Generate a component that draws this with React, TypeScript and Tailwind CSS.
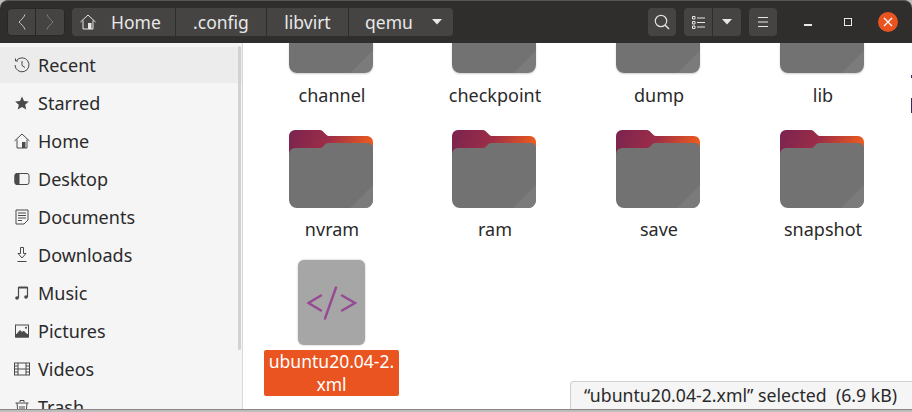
import React from "react";

const font = "font-['Noto_Sans','Open_Sans',sans-serif]";

function Folder() {
  return (
    <svg width="84" height="78" viewBox="0 0 84 78" className="block">
      <defs>
        <linearGradient id="fb" x1="0" y1="0" x2="1" y2="0.2">
          <stop offset="0" stopColor="#7a2350" />
          <stop offset="0.5" stopColor="#9c2d47" />
          <stop offset="1" stopColor="#ec5a1e" />
        </linearGradient>
      </defs>
      <path d="M0 40V6a6 6 0 0 1 6-6h24c2 0 3 .5 4 1.500l3 3c1 1 2 1.500 3 1.500h38a6 6 0 0 1 6 6v28z" fill="url(#fb)" />
      <path d="M0 24a6 6 0 0 1 6-6h25c1 0 2-.5 3-1.500l2.500-2.500c1-1 2-1 3.500-1h39a5 5 0 0 1 5 5v52a8 8 0 0 1-8 8H8a8 8 0 0 1-8-8z" fill="#727272" />
      <path d="M84 55v15a8 8 0 0 1-8 8H61z" fill="#7b7b7b" />
    </svg>
  );
}

function CutFolder() {
  return (
    <div className="h-[30px] w-[84px] rounded-b-[8px] bg-[linear-gradient(135deg,#727272_calc(100%-16px),#7b7b7b_calc(100%-16px))] shadow-[0_1px_2px_rgba(0,0,0,0.2)]" />
  );
}

function Cell({ label }: { label: string }) {
  return (
    <div className="flex flex-col items-center">
      <Folder />
      <span className="mt-[9px] pl-[2px] text-[18px] leading-[24px] text-[#2a2a2a]">{label}</span>
    </div>
  );
}

const ic = "w-[16px] h-[16px] text-[#4a4a4a]";
const icons: Record<string, React.ReactNode> = {
  Recent: (
    <svg viewBox="0 0 16 16" className={ic} fill="none" stroke="currentColor" strokeWidth="1"><path d="M2.500 3.500A7 7 0 1 1 1 8" /><path d="M1.500 1.500v2.500h2.500M8 4v4.500l3 2" /></svg>
  ),
  Starred: (
    <svg viewBox="0 0 16 16" className={ic} fill="currentColor"><path d="M8 1.500l2 4.500 4.800.5-3.600 3.200 1 4.800L8 12.100 3.800 14.500l1-4.800L1.200 6.500 6 6z" /></svg>
  ),
  Home: (
    <svg viewBox="0 0 16 16" className={ic} fill="none" stroke="currentColor" strokeWidth="1"><path d="M.5 8L8 1l7.500 7M3 6.500V15h10V6.500" /><rect x="8" y="9" width="3.500" height="6" fill="currentColor" stroke="none" /></svg>
  ),
  Desktop: (
    <svg viewBox="0 0 16 16" className={ic} fill="none" stroke="currentColor" strokeWidth="1"><rect x="1" y="2.500" width="14" height="11" rx="2" /><path d="M3 2.500h2v11H3a2 2 0 0 1-2-2v-7a2 2 0 0 1 2-2z" fill="currentColor" /></svg>
  ),
  Documents: (
    <svg viewBox="0 0 16 16" className={ic} fill="none" stroke="currentColor" strokeWidth="1"><path d="M2 1h12v10l-4 4H2z" /><path d="M4 4h8M4 6.500h8M4 9h8M4 11.500h4" /></svg>
  ),
  Downloads: (
    <svg viewBox="0 0 16 16" className={ic} fill="none" stroke="currentColor" strokeWidth="1"><path d="M6.500 .5h3v6H12L8 11 4 6.500h2.500zM3.500 14.500h9" /></svg>
  ),
  Music: (
    <svg viewBox="0 0 16 16" className={ic} fill="none" stroke="currentColor" strokeWidth="1.200"><path d="M4.500 13V2.500h9V12" /><path d="M4.500 2.500h9" strokeWidth="2" /><circle cx="3" cy="13" r="1.800" fill="currentColor" stroke="none" /><circle cx="12" cy="12" r="1.800" fill="currentColor" stroke="none" /></svg>
  ),
  Pictures: (
    <svg viewBox="0 0 16 16" className={ic} fill="none" stroke="currentColor" strokeWidth="1"><rect x="1.500" y="2" width="13" height="12" /><path d="M3 11l3-3.500 2 2 1.500-1.500 3 3z M1.500 11.500h13v2.500h-13z" fill="currentColor" /><circle cx="12" cy="4.800" r="1" fill="currentColor" stroke="none" /></svg>
  ),
  Videos: (
    <svg viewBox="0 0 16 16" className={ic} fill="none" stroke="currentColor" strokeWidth="1"><rect x=".5" y="2" width="15" height="12" /><path d="M4 2v12M12 2v12M4 8h8M.5 5h3.500M.5 8h3.500M.5 11h3.500M12 5h3.500M12 8h3.500M12 11h3.500" /></svg>
  ),
  Trash: (
    <svg viewBox="0 0 16 16" className={ic} fill="none" stroke="currentColor" strokeWidth="1"><path d="M1.500 4h13M6 3V1.500h4V3M3 4l1 11h8l1-11M6 7v6M8 7v6M10 7v6" /></svg>
  ),
};

function SideRow({ label, active }: { label: string; active?: boolean }) {
  return (
    <div className={`h-[36px] mb-[2px] shrink-0 flex items-center pl-[14px] gap-[8px] ${active ? "bg-[#ececec]" : ""}`}>
      {icons[label]}
      <span className="text-[18px] text-[#2a2a2a]">{label}</span>
    </div>
  );
}

const crumbBorder = "border-r border-[#2f2d2c]";

export default function App() {
  return (
    <div className={`w-[912px] h-[412px] overflow-hidden bg-[#bdbdbd] flex flex-col relative ${font}`}>
      <header className="h-[43px] shrink-0 bg-[#302e2d] rounded-t-[8px] border-t border-[#555] flex items-center pl-[7px] pr-[14px] text-[#e8e8e8]">
        <div className="flex h-[28px] w-[58px] rounded-[4px] bg-[#454443] border border-[#2a2827]">
          <div className="w-[28px] flex items-center justify-center border-r border-[#2a2827]">
            <svg width="8" height="16" viewBox="0 0 8 16" fill="none" stroke="#c9c9c9"><path d="M7 .5C6 3.500 3 6 1 8c2 2 5 4.500 6 7.500" /></svg>
          </div>
          <div className="flex-1 flex items-center justify-center">
            <svg width="8" height="16" viewBox="0 0 8 16" fill="none" stroke="#7d7d7d"><path d="M1 .5C2 3.500 5 6 7 8c-2 2-5 4.500-6 7.500" /></svg>
          </div>
        </div>
        <div className="ml-[7px] flex h-[28px] w-[381px] rounded-[4px] bg-[#454443] text-[17.5px] items-stretch">
          <div className={`w-[104px] flex items-center pl-[8px] gap-[15px] ${crumbBorder}`}>
            <svg width="16" height="16" viewBox="0 0 16 16" fill="none" stroke="#e8e8e8"><path d="M.5 8L8 1l7.500 7M3 6.500V15h10V6.500" /><rect x="8" y="9" width="3.500" height="6" fill="#e8e8e8" stroke="none" /></svg>
            <span>Home</span>
          </div>
          <div className={`w-[91px] flex items-center justify-center ${crumbBorder}`}>.config</div>
          <div className={`w-[82px] flex items-center justify-center ${crumbBorder}`}>libvirt</div>
          <div className="flex-1 flex items-center pl-[16px]">
            <span>qemu</span>
            <svg width="10" height="6" viewBox="0 0 10 6" className="ml-[19px]"><path d="M0 0h10L5 5.500z" fill="#e8e8e8" /></svg>
          </div>
        </div>
        <div className="flex-1" />
        <div className="w-[28px] h-[28px] rounded-[4px] bg-[#454443] flex items-center justify-center">
          <svg width="16" height="16" viewBox="0 0 16 16" fill="none" stroke="#e0e0e0" strokeWidth="1.200"><circle cx="7" cy="7" r="5.700" /><path d="M11 11l4 4" strokeWidth="1.600" /></svg>
        </div>
        <div className="ml-[8px] flex w-[57px] h-[28px] rounded-[4px] bg-[#454443]">
          <div className={`w-[29px] flex items-center justify-center ${crumbBorder}`}>
            <svg width="13" height="13" viewBox="0 0 13 13" fill="none" stroke="#e8e8e8"><path d="M.5.500h2.500v2.500H.5zM.5 5.500h2.500v2.500H.5zM.5 10h2.500v2.500H.5zM5 2h8M5 6.500h8M5 11h8" /></svg>
          </div>
          <div className="flex-1 flex items-center justify-center">
            <svg width="10" height="6" viewBox="0 0 10 6"><path d="M0 0h10L5 5.500z" fill="#e8e8e8" /></svg>
          </div>
        </div>
        <div className="ml-[8px] w-[28px] h-[28px] rounded-[4px] bg-[#454443] flex items-center justify-center">
          <svg width="14" height="12" viewBox="0 0 14 12" fill="none" stroke="#e8e8e8"><path d="M2 1.500h10M2 6h10M2 10.500h10" /></svg>
        </div>
        <div className="ml-[27px] w-[8px] h-[2px] bg-[#e8e8e8] mt-[6px]" />
        <div className="ml-[32px] w-[8px] h-[8px] border border-[#e8e8e8]" />
        <div className="ml-[26px] w-[20px] h-[20px] rounded-full bg-[#e95420] flex items-center justify-center">
          <svg width="10" height="10" viewBox="0 0 10 10" stroke="#fff" strokeWidth="1.200"><path d="M1 1l8 8M9 1l-8 8" /></svg>
        </div>
      </header>
      <div className="flex flex-1 min-h-0 mb-[2px] bg-white border-b border-[#888]">
        <aside className="w-[243px] shrink-0 bg-[#f5f5f5] border-r border-[#d8d8d8] pt-[4px] overflow-hidden relative">
          <SideRow label="Recent" active />
          <SideRow label="Starred" />
          <SideRow label="Home" />
          <SideRow label="Desktop" />
          <SideRow label="Documents" />
          <SideRow label="Downloads" />
          <SideRow label="Music" />
          <SideRow label="Pictures" />
          <SideRow label="Videos" />
          <SideRow label="Trash" />
          <div className="absolute right-[1px] top-[3px] w-[3px] h-[304px] bg-[#d2d2d2] rounded-[2px]" />
        </aside>
        <main className="flex-1 relative overflow-hidden">
          <div className="grid grid-cols-[162px_164px_164px_164px] pl-[7px]">
            {["channel", "checkpoint", "dump", "lib"].map((n) => (
              <div key={n} className="flex flex-col items-center h-[87px]">
                <CutFolder />
                <span className="mt-[10px] pl-[2px] text-[18px] leading-[24px] text-[#2a2a2a]">{n}</span>
              </div>
            ))}
            {["nvram", "ram", "save", "snapshot"].map((n) => (
              <Cell key={n} label={n} />
            ))}
          </div>
          <div className="w-[135px] ml-[21px] mt-[19px] flex flex-col items-center">
            <div className="w-[67px] h-[85px] rounded-[6px] bg-[#a6a6a6] flex items-center justify-center shadow-[0_0_2px_rgba(0,0,0,0.3)]">
              <svg width="50" height="34" viewBox="0 0 50 34" fill="none" stroke="#964a93" strokeWidth="2.400" strokeLinecap="round"><path d="M14 9.500L1.500 17 14 24.500M29 1.500L18 32.500M35 9.500L48 17 35 24.500" /></svg>
            </div>
            <div className="mt-[5px] w-[135px] h-[46px] rounded-[2px] bg-[#e95420] text-white text-[17.5px] leading-[23px] text-center whitespace-nowrap">
              ubuntu20.04-2.<br />xml
            </div>
          </div>
          <div className="absolute right-0 bottom-0 w-[342px] h-[28px] bg-[#f5f5f5] border-l border-t border-[#d0d0d0] rounded-tl-[4px] flex items-center pl-[13px] text-[17.7px] text-[#2a2a2a] whitespace-pre">
            “ubuntu20.04-2.xml” selected  (6.9 kB)
          </div>
        </main>
      </div>
      <div className="absolute right-0 top-[75px] w-[1px] h-[3px] bg-[#3b2a6b]" />
      <div className="absolute right-0 top-[98px] w-[1px] h-[15px] bg-[#3b2a6b]" />
    </div>
  );
}
